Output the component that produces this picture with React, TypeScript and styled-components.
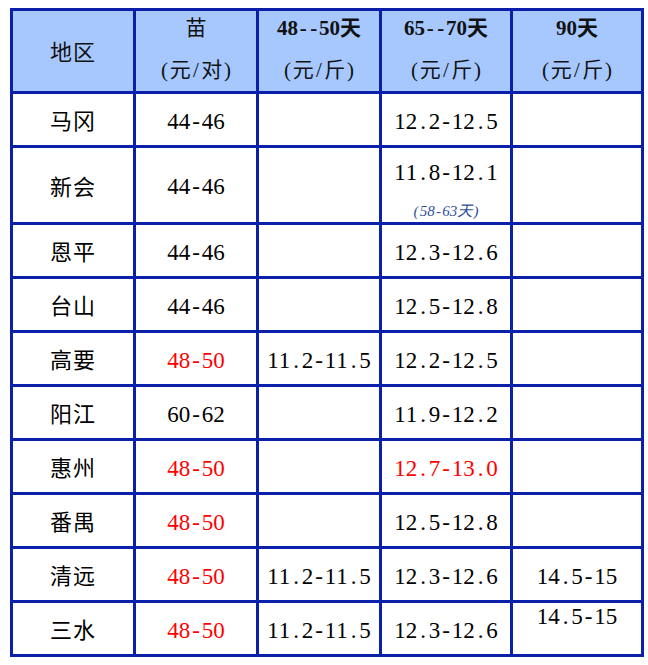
import React from 'react';
import styled, { createGlobalStyle } from 'styled-components';

const GlobalStyle = createGlobalStyle`
  html, body {
    margin: 0;
    padding: 0;
    background: #ffffff;
  }
`;

const LINE = '#0a20aa';
const HEAD_BG = '#a6c8ff';
const CJK = `"Noto Sans CJK SC", sans-serif`;
const SERIF = `"Liberation Serif", "Noto Sans CJK SC", serif`;

const Page = styled.div`
  padding: 8px 0 0 10px;
`;

// the grid lines are the blue background showing through the gaps
const Table = styled.div`
  display: inline-grid;
  grid-template-columns: 120px 120px 120px 128px 128px;
  grid-template-rows: 80px 51px 74px repeat(8, 51px);
  gap: 3px;
  padding: 3px;
  background: ${LINE};
`;

const HeadCell = styled.div`
  background: ${HEAD_BG};
  display: flex;
  flex-direction: column;
  align-items: center;
  justify-content: center;
  gap: 18px;
  padding-bottom: 5px;
  color: #111;
`;

const HeadLine = styled.div<{ $bold?: boolean }>`
  font-family: ${SERIF};
  font-size: 21px;
  line-height: 24px;
  font-weight: ${p => (p.$bold ? 700 : 400)};
  white-space: nowrap;
`;

const RegionHead = styled.div`
  font-family: ${CJK};
  font-size: 22px;
  line-height: 26px;
  letter-spacing: 1px;
  padding-top: 3px;
`;

const BodyCell = styled.div<{ $top?: boolean }>`
  background: #ffffff;
  display: flex;
  flex-direction: column;
  align-items: center;
  justify-content: ${p => (p.$top ? 'flex-start' : 'center')};
  padding-top: ${p => (p.$top ? '1px' : '4px')};
  box-sizing: border-box;
`;

const NoteCell = styled(BodyCell)`
  justify-content: flex-start;
  padding-top: 12px;
  gap: 17px;
`;

const Region = styled.div`
  font-family: ${CJK};
  font-size: 22px;
  line-height: 26px;
  letter-spacing: 1px;
  margin-top: -5px;
  color: #000;
`;

const Value = styled.div<{ $red?: boolean }>`
  font-family: ${SERIF};
  font-size: 23px;
  line-height: 26px;
  color: ${p => (p.$red ? '#ff0000' : '#000000')};
  white-space: nowrap;
`;

const Note = styled.div`
  font-family: ${SERIF};
  font-style: italic;
  font-size: 15px;
  line-height: 16px;
  color: #2f4f9f;
  white-space: nowrap;
`;

// half-width cell, like the fixed pitch of the original song typeface
const Half = styled.span`
  display: inline-block;
  width: 0.5em;
  text-align: center;
`;

const Glyphs: React.FC<{ text: string }> = ({ text }) => (
  <>
    {[...text].map((c, i) =>
      c.charCodeAt(0) < 0x2000 ? <Half key={i}>{c}</Half> : <span key={i}>{c}</span>
    )}
  </>
);

type Row = {
  region: string;
  seed: string;
  seedRed?: boolean;
  d50?: string;
  d70?: string;
  d70Red?: boolean;
  note?: string;
  d90?: string;
  d90Top?: boolean;
};

const rows: Row[] = [
  { region: '马冈', seed: '44-46', d70: '12.2-12.5' },
  { region: '新会', seed: '44-46', d70: '11.8-12.1', note: '(58-63天)' },
  { region: '恩平', seed: '44-46', d70: '12.3-12.6' },
  { region: '台山', seed: '44-46', d70: '12.5-12.8' },
  { region: '高要', seed: '48-50', seedRed: true, d50: '11.2-11.5', d70: '12.2-12.5' },
  { region: '阳江', seed: '60-62', d70: '11.9-12.2' },
  { region: '惠州', seed: '48-50', seedRed: true, d70: '12.7-13.0', d70Red: true },
  { region: '番禺', seed: '48-50', seedRed: true, d70: '12.5-12.8' },
  { region: '清远', seed: '48-50', seedRed: true, d50: '11.2-11.5', d70: '12.3-12.6', d90: '14.5-15' },
  { region: '三水', seed: '48-50', seedRed: true, d50: '11.2-11.5', d70: '12.3-12.6', d90: '14.5-15', d90Top: true },
];

const headers = [
  ['苗', '(元/对)'],
  ['48--50天', '(元/斤)'],
  ['65--70天', '(元/斤)'],
  ['90天', '(元/斤)'],
];

export default function App() {
  return (
    <>
      <GlobalStyle />
      <Page>
        <Table>
          <HeadCell>
            <RegionHead>地区</RegionHead>
          </HeadCell>
          {headers.map(([top, unit]) => (
            <HeadCell key={top}>
              <HeadLine $bold={top !== '苗'}>
                <Glyphs text={top} />
              </HeadLine>
              <HeadLine>
                <Glyphs text={unit} />
              </HeadLine>
            </HeadCell>
          ))}

          {rows.map(r => (
            <React.Fragment key={r.region}>
              <BodyCell>
                <Region>{r.region}</Region>
              </BodyCell>
              <BodyCell>
                <Value $red={r.seedRed}>
                  <Glyphs text={r.seed} />
                </Value>
              </BodyCell>
              <BodyCell>
                {r.d50 && (
                  <Value>
                    <Glyphs text={r.d50} />
                  </Value>
                )}
              </BodyCell>
              {r.note ? (
                <NoteCell>
                  <Value>
                    <Glyphs text={r.d70 || ''} />
                  </Value>
                  <Note>
                    <Glyphs text={r.note} />
                  </Note>
                </NoteCell>
              ) : (
                <BodyCell>
                  {r.d70 && (
                    <Value $red={r.d70Red}>
                      <Glyphs text={r.d70} />
                    </Value>
                  )}
                </BodyCell>
              )}
              <BodyCell $top={r.d90Top}>
                {r.d90 && (
                  <Value>
                    <Glyphs text={r.d90} />
                  </Value>
                )}
              </BodyCell>
            </React.Fragment>
          ))}
        </Table>
      </Page>
    </>
  );
}
